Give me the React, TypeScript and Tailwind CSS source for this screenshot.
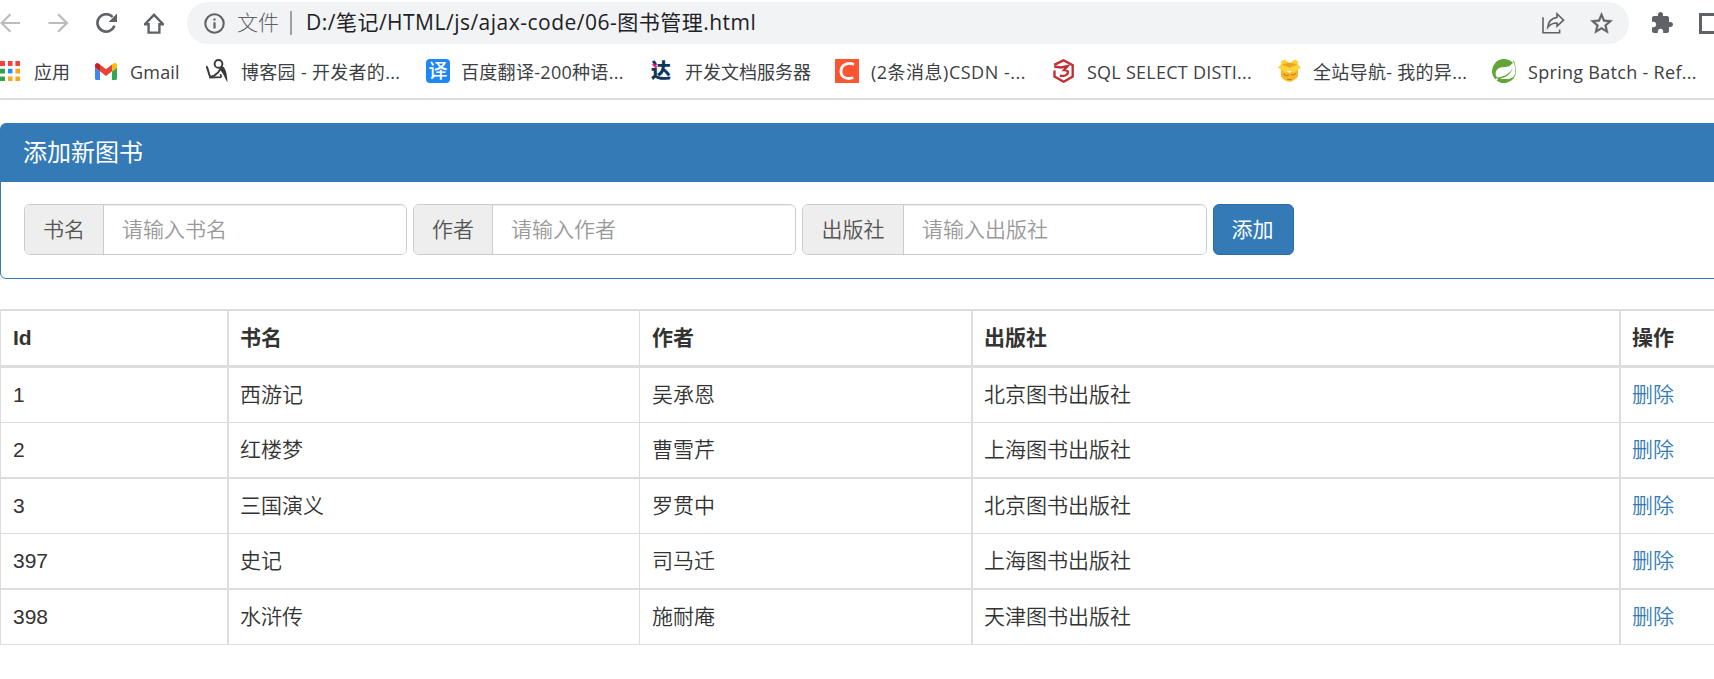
import type { ReactNode } from 'react';

const chromeFont = "font-['Open_Sans','Noto_Sans_CJK_SC',sans-serif]";
const pageFont = "font-['Liberation_Sans','Noto_Sans_CJK_SC',sans-serif]";

const BackIcon = () => (
  <svg width="21" height="20" viewBox="0 0 21 20" fill="none" stroke="#babcbe" strokeWidth="2.2">
    <path d="M20 10H2M10.4 1.2 1.6 10l8.8 8.8" />
  </svg>
);
const ForwardIcon = () => (
  <svg width="21" height="20" viewBox="0 0 21 20" fill="none" stroke="#babcbe" strokeWidth="2.2">
    <path d="M.5 10h18M10.1 1.2l8.8 8.8-8.8 8.8" />
  </svg>
);
const ReloadIcon = () => (
  <svg width="22" height="20" viewBox="0 0 22 20">
    <path d="M18.4 12.6A8.700 8.700 0 1 1 16.600 4" fill="none" stroke="#5f6368" strokeWidth="2.600" />
    <path d="M21 .6v8.400h-8.400z" fill="#5f6368" />
  </svg>
);
const HomeIcon = () => (
  <svg width="20" height="21" viewBox="0 0 20 21" fill="none" stroke="#5f6368" strokeWidth="2.400">
    <path d="M1 11.200h3.600v8.400h10.800v-8.400H19L10 1.800z" />
  </svg>
);
const InfoIcon = () => (
  <svg width="21" height="21" viewBox="0 0 21 21">
    <circle cx="10.5" cy="10.5" r="9.200" fill="none" stroke="#5f6368" strokeWidth="2.100" />
    <path d="M9.400 9.200h2.200v6.200H9.400zM9.400 5.400h2.200v2.200H9.400z" fill="#5f6368" />
  </svg>
);
const ShareIcon = () => (
  <svg width="23" height="22" viewBox="0 0 23 22" fill="none" stroke="#5f6368" strokeWidth="1.600">
    <path d="M1 5.200v15.600h16.600v-3.200" />
    <path d="M15 1.800 21.600 8.200 15 14.200V11c-4.200 0-7 1.200-9.200 4.200C6.400 9.800 9.600 6.200 15 5.400z" />
  </svg>
);
const StarIcon = () => (
  <svg width="23" height="23" viewBox="1.500 1.500 21 21">
    <path
      fill="#5f6368"
      stroke="#5f6368"
      strokeWidth=".4"
      d="m22 9.240-7.190-.62L12 2 9.190 8.630 2 9.240l5.460 4.730L5.820 21 12 17.270 18.180 21l-1.630-7.030L22 9.240zM12 15.400l-3.760 2.270 1-4.280-3.320-2.880 4.380-.38L12 6.100l1.710 4.040 4.380.38-3.320 2.880 1 4.280L12 15.400z"
    />
  </svg>
);
const PuzzleIcon = () => (
  <svg width="24" height="24" viewBox="0 0 24 24">
    <path
      fill="#5f6368"
      d="M20.500 11H19V7c0-1.100-.9-2-2-2h-4V3.500C13 2.120 11.880 1 10.500 1S8 2.120 8 3.500V5H4c-1.100 0-1.990.9-1.990 2v3.800H3.500c1.490 0 2.700 1.210 2.700 2.700s-1.210 2.700-2.700 2.700H2V20c0 1.100.9 2 2 2h3.800v-1.500c0-1.490 1.210-2.700 2.700-2.700s2.700 1.210 2.700 2.700V22H17c1.100 0 2-.9 2-2v-4h1.500c1.380 0 2.500-1.120 2.500-2.500S21.880 11 20.500 11z"
    />
  </svg>
);

const AppsIcon = () => (
  <svg width="20" height="20" viewBox="0 0 20 20">
    <path fill="#f4433c" d="M0 0h5v5H0zM8 0h4.500v5H8zM15.400 0H20v5h-4.600z" />
    <path fill="#34a050" d="M0 7.800h5v4.600H0zM0 15.400h5V20H0z" />
    <path fill="#2090f8" d="M8 7.800h4.500v4.600H8z" />
    <path fill="#f8a818" d="M15.400 7.800H20v4.600h-4.600zM15.400 15.400H20V20h-4.600zM8 15.400h4.500V20H8z" />
  </svg>
);
const GmailIcon = () => (
  <svg width="22" height="17" viewBox="52 42 88 66" preserveAspectRatio="none">
    <path fill="#4285f4" d="M58 108h14V74L52 59v43c0 3.320 2.690 6 6 6" />
    <path fill="#34a853" d="M120 108h14c3.320 0 6-2.690 6-6V59l-20 15" />
    <path fill="#fbbc04" d="M120 48v26l20-15v-8c0-7.420-8.470-11.650-14.400-7.200" />
    <path fill="#ea4335" d="M72 74V48l24 18 24-18v26L96 92" />
    <path fill="#c5221f" d="M52 51v8l20 15V48l-5.600-4.200c-5.940-4.450-14.400-.22-14.400 7.200" />
  </svg>
);
const CnblogsIcon = () => (
  <svg width="23" height="24" viewBox="0 0 23 24">
    <circle cx="12.500" cy="4.900" r="3.900" fill="none" stroke="#3a3a3a" strokeWidth="1.900" />
    <path d="M.3 7.200c1.500 2 2 5.400 3.100 8.800l1 1.900 3.800-1.300c2.600-1.600 4.800-3.600 6.600-7" fill="none" stroke="#3a3a3a" strokeWidth="2" />
    <path d="M16.400 7.200c1.900.8 3 3 3.800 6.200.7 3 1.200 6.400 1.300 10.200l-2.400-4.400C17.500 15.200 15.600 12.400 13 9.800z" fill="#3a3a3a" />
    <path d="M3.200 18.600l12.400-.5M15.400 17.900l-1-2.600" fill="none" stroke="#3a3a3a" strokeWidth="1.800" />
  </svg>
);
const TranslateIcon = () => (
  <span className="flex h-6 w-6 items-center justify-center rounded bg-[#1e87f6] text-[19px] leading-none font-medium text-white">译</span>
);
const DocsIcon = () => (
  <span className="relative block w-5 text-[20px] leading-[20px] font-black text-[#0b3559]">
    达
    <svg className="absolute left-px top-[2px]" width="6" height="6" viewBox="0 0 6 6">
      <path d="M0 1.500 1.800 0 5.500 3.800 3.600 5.500z" fill="#f01e78" />
    </svg>
  </span>
);
const CsdnIcon = () => (
  <svg width="24" height="24" viewBox="0 0 24 24">
    <path fill="#fc5531" d="M0 0h24v24H0z" />
    <path d="M19 5.600C13.400 2.900 6 5.200 6 12.600c0 6.400 6.600 8.200 12.300 5.900" fill="none" stroke="#fff" strokeWidth="2.800" />
  </svg>
);
const SqlIcon = () => (
  <svg width="22" height="24" viewBox="0 0 22 24" fill="none" stroke="#c03035">
    <path d="M1.200 5.800 10.500 1.300l9.200 5v11.200l-9 5.200-9.200-5.200v-6" strokeWidth="2.400" />
    <path d="M1.200 7.400 8 8.400l6.500-1.200-3.300 3.800c3 0 4.200 1.200 3.600 3-.6 2.100-4 3.300-8 2.700" strokeWidth="2.500" />
  </svg>
);
const BoxIcon = () => (
  <svg width="23" height="24" viewBox="0 0 23 24">
    <path d="M3 9.500 11.500 14 20 9.500v7.700c-.8 2.200-5.800 5.400-8.500 5.600C8.500 22.500 3.600 19.400 3 17.200z" fill="#f8b928" />
    <path d="M0 8.400 3.400 5 2.800 2.200 7 .4l4.600 3.800L16.600.4l3.600 2.200-.6 2.700L23 8.600l-7.400 5.200-4.100-2.200-4 2.200z" fill="#fcd23a" />
    <path d="M3.500 5.200 11.500 8.800l8-3.500-8-1.500z" fill="#e9a51c" />
    <path d="M5.500 14.700c2 2.200 4 2.500 5.500 1M13 15.700c2 .6 3.800-.2 5-1.600M9 20.500h5" fill="none" stroke="#c97f12" strokeWidth="1.200" />
  </svg>
);
const SpringIcon = () => (
  <svg width="24" height="24" viewBox="0 0 24 24">
    <path
      fill="#62a438"
      d="M21.854 1.373a10.700 10.700 0 0 1-1.284 2.279A12.004 12.004 0 1 0 3.852 20.872l.444.395a12 12 0 0 0 19.632-8.298c.346-3.013-.568-6.865-2.074-11.596zM5.580 20.875a1.017 1.017 0 1 1-.149-1.433c.437.357.506.997.15 1.433zm16.199-3.642c-2.931 3.912-9.233 2.586-13.249 2.778 0 0-.717.046-1.430.159 0 0 .268-.118.615-.241 2.821-.985 4.155-1.173 5.870-2.057 3.221-1.653 6.422-5.263 7.073-9.015-1.230 3.602-4.970 6.695-8.370 7.955-2.332.858-6.543 1.694-6.543 1.694l-.17-.093c-2.863-1.396-2.952-7.611 2.257-9.609 2.281-.878 4.463-.396 6.926-.985 2.632-.624 5.674-2.594 6.910-5.166 1.388 4.108 3.055 10.560.111 14.580z"
    />
  </svg>
);

type Bookmark = { icon: ReactNode; label: string; item: string; slot: string; text: string };

const bookmarks: Bookmark[] = [
  { icon: <AppsIcon />, label: '应用', item: 'w-[95px]', slot: 'w-[34px]', text: '' },
  { icon: <GmailIcon />, label: 'Gmail', item: 'w-[111px]', slot: 'w-[35px]', text: 'tracking-[0.2px]' },
  { icon: <CnblogsIcon />, label: '博客园 - 开发者的...', item: 'w-[220px]', slot: 'w-[35px]', text: 'tracking-[0.3px]' },
  { icon: <TranslateIcon />, label: '百度翻译-200种语...', item: 'w-[225px]', slot: 'w-[35px]', text: 'tracking-[0.3px]' },
  { icon: <DocsIcon />, label: '开发文档服务器', item: 'w-[184px]', slot: 'w-[34px]', text: '' },
  { icon: <CsdnIcon />, label: '(2条消息)CSDN -...', item: 'w-[218px]', slot: 'w-9', text: 'tracking-[0.5px]' },
  { icon: <SqlIcon />, label: 'SQL SELECT DISTI...', item: 'w-[225px]', slot: 'w-[34px]', text: 'tracking-[0.25px]' },
  { icon: <BoxIcon />, label: '全站导航- 我的异...', item: 'w-[214px]', slot: 'w-[35px]', text: 'tracking-[0.3px]' },
  { icon: <SpringIcon />, label: 'Spring Batch - Ref...', item: 'w-[222px]', slot: 'w-9', text: 'tracking-[0.3px]' },
];

const books = [
  { id: 1, name: '西游记', author: '吴承恩', press: '北京图书出版社', row: 'h-[55px]', line: 'border-b' },
  { id: 2, name: '红楼梦', author: '曹雪芹', press: '上海图书出版社', row: 'h-[56px]', line: 'border-b-2' },
  { id: 3, name: '三国演义', author: '罗贯中', press: '北京图书出版社', row: 'h-[55px]', line: 'border-b' },
  { id: 397, name: '史记', author: '司马迁', press: '上海图书出版社', row: 'h-[56px]', line: 'border-b-2' },
  { id: 398, name: '水浒传', author: '施耐庵', press: '天津图书出版社', row: 'h-[55px]', line: 'border-b' },
];

const columns = [
  'border-l pl-3 font-normal',
  'border-l-2 pl-[11px]',
  'border-l pl-[12px]',
  'border-l-2 pl-[11px]',
  'border-l-2 pl-[11px]',
];

function Field({ label, placeholder, addon }: { label: string; placeholder: string; addon: string }) {
  return (
    <div className="flex h-[51px] rounded-md border border-[#ccc]">
      <span className={`flex items-center justify-center rounded-l-[5px] border-r border-[#ccc] bg-[#eee] text-[#555] ${addon}`}>{label}</span>
      <input
        className="w-[302px] rounded-r-[5px] bg-white pl-[18px] shadow-[inset_0_1px_1px_rgba(0,0,0,0.075)] outline-none placeholder:text-[#999] placeholder:opacity-100"
        placeholder={placeholder}
      />
    </div>
  );
}

export default function App() {
  return (
    <div className="h-[679px] w-[1714px] overflow-hidden bg-white">
      <header className={`h-[100px] border-b-2 border-[#dcdcdc] ${chromeFont}`}>
        <div className="flex h-[44px] items-center pt-[2px]">
          <div className="w-12 shrink-0"><BackIcon /></div>
          <div className="w-12 shrink-0"><ForwardIcon /></div>
          <div className="w-12 shrink-0"><ReloadIcon /></div>
          <div className="w-[43px] shrink-0"><HomeIcon /></div>
          <div className="flex h-[42px] w-[1442px] shrink-0 items-center rounded-full bg-[#f1f3f4] pl-[17px] text-[21px]">
            <InfoIcon />
            <span className="ml-3 w-[53px] shrink-0 font-light whitespace-nowrap text-[#5f6368]">文件</span>
            <span className="h-6 w-[2px] shrink-0 bg-[#9aa0a6]" />
            <span className="ml-3.5 w-[1236px] shrink-0 tracking-[0.49px] whitespace-nowrap text-[#202124]">D:/笔记/HTML/js/ajax-code/06-图书管理.html</span>
            <span className="w-12 shrink-0"><ShareIcon /></span>
            <StarIcon />
          </div>
          <div className="ml-[21px] w-[49px] shrink-0"><PuzzleIcon /></div>
          <div className="h-[21px] w-[24px] shrink-0 border-[3px] border-[#5f6368]" />
        </div>
        <nav className="flex h-[54px] items-center text-[18px] text-[#3c4043]">
          {bookmarks.map((b) => (
            <div key={b.label} className={`flex shrink-0 items-center ${b.item}`}>
              <span className={`shrink-0 ${b.slot}`}>{b.icon}</span>
              <span className={`pt-0.5 whitespace-nowrap ${b.text}`}>{b.label}</span>
            </div>
          ))}
        </nav>
      </header>

      <main className={`pt-[23px] font-[350] text-[21px] leading-[30px] text-[#333] ${pageFont}`}>
        <section className="h-[156px] w-[1720px] rounded-md border border-[#337ab7]">
          <h3 className="flex h-[58px] items-center rounded-t-[4px] bg-[#337ab7] pl-[22px] text-[24px] font-normal text-white">添加新图书</h3>
          <div className="flex gap-1.5 pt-[22px] pl-[23px]">
            <Field label="书名" placeholder="请输入书名" addon="w-[79px]" />
            <Field label="作者" placeholder="请输入作者" addon="w-[79px]" />
            <Field label="出版社" placeholder="请输入出版社" addon="w-[101px]" />
            <button className="h-[51px] w-[81px] rounded-md border border-[#2e6da4] bg-[#337ab7] pr-0.5 font-normal text-white">添加</button>
          </div>
        </section>

        <table className="mt-[30px] w-[1714px] table-fixed border-separate border-spacing-0 text-left">
          <colgroup>
            <col className="w-[227px]" />
            <col className="w-[412px]" />
            <col className="w-[332px]" />
            <col className="w-[648px]" />
            <col className="w-[95px]" />
          </colgroup>
          <thead>
            <tr className="h-[59px]">
              {['Id', '书名', '作者', '出版社', '操作'].map((title, i) => (
                <th key={title} className={`border-t-2 border-b-3 border-[#ddd] py-0 pr-0 ${columns[i]}`}>
                  <span className="font-bold">{title}</span>
                </th>
              ))}
            </tr>
          </thead>
          <tbody>
            {books.map((b) => (
              <tr key={b.id} className={b.row}>
                {[b.id, b.name, b.author, b.press].map((value, i) => (
                  <td key={i} className={`border-[#ddd] py-0 pr-0 ${b.line} ${columns[i]}`}>{value}</td>
                ))}
                <td className={`border-[#ddd] py-0 pr-0 ${b.line} ${columns[4]}`}>
                  <a className="text-[#337ab7]" href="#">删除</a>
                </td>
              </tr>
            ))}
          </tbody>
        </table>
      </main>
    </div>
  );
}
